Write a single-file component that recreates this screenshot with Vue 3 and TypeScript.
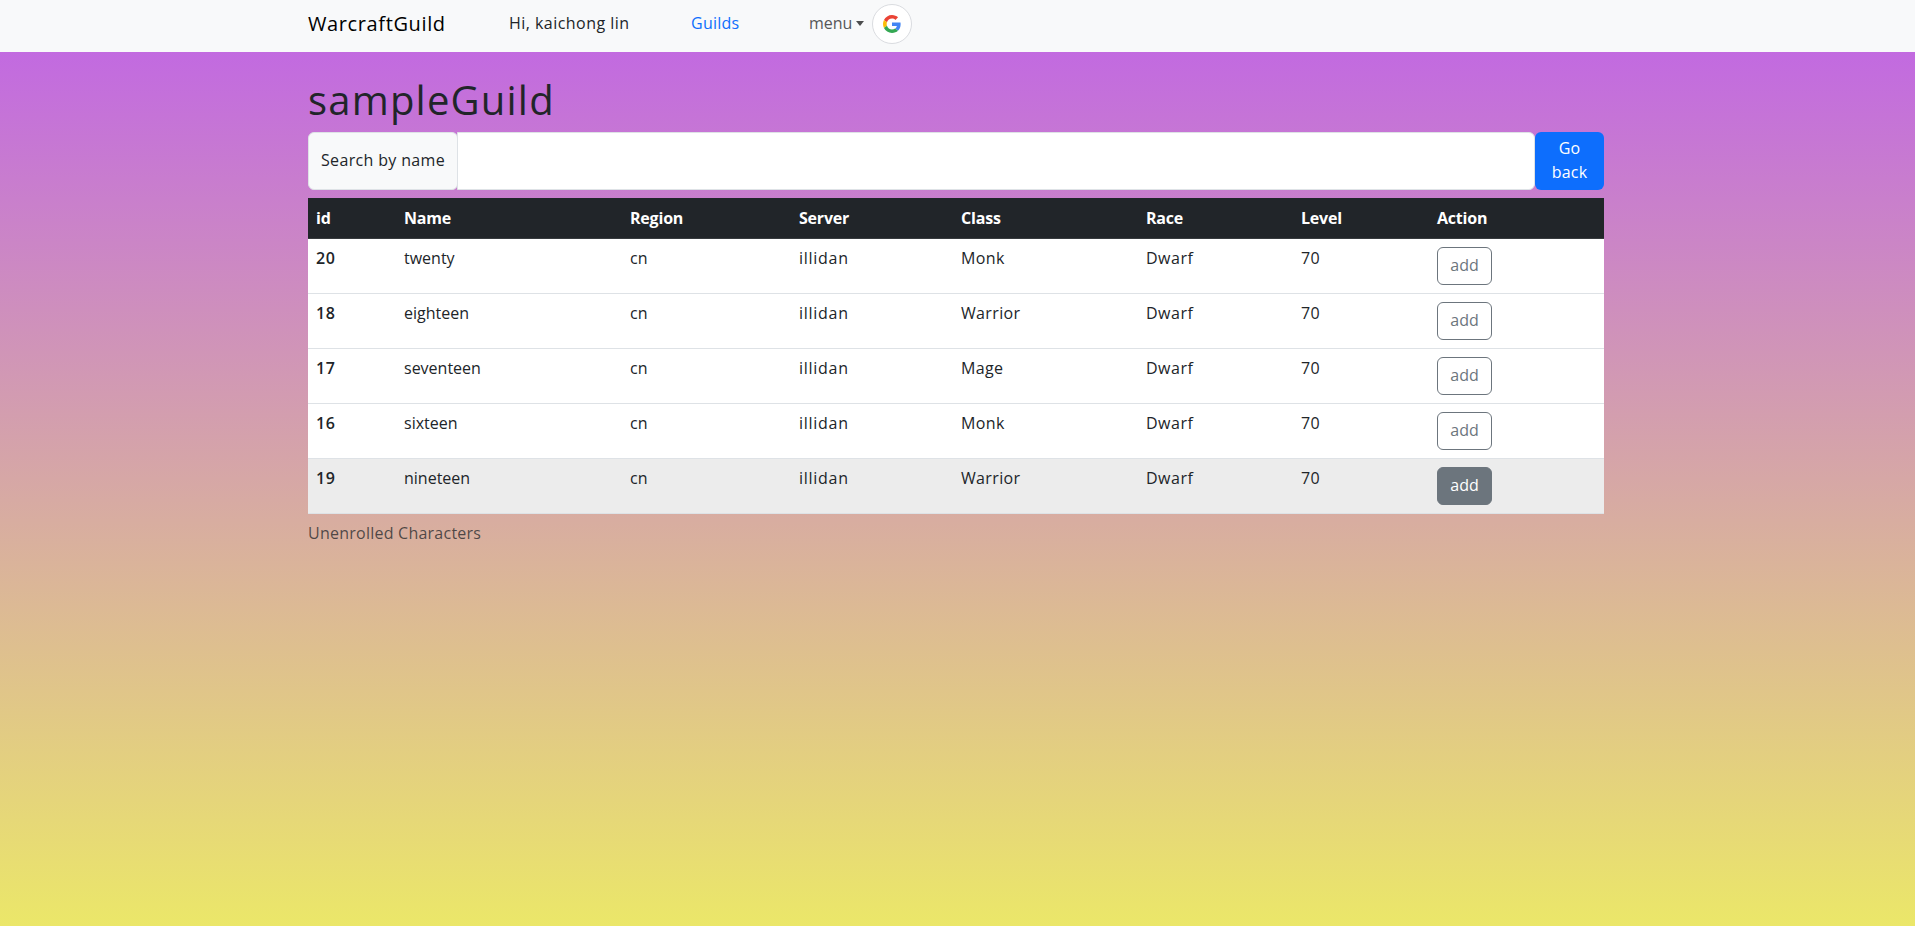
<script setup lang="ts">
interface Character {
  id: number
  name: string
  region: string
  server: string
  className: string
  race: string
  level: number
  active?: boolean
}

const columns: string[] = ['id', 'Name', 'Region', 'Server', 'Class', 'Race', 'Level', 'Action']

const characters: Character[] = [
  { id: 20, name: 'twenty', region: 'cn', server: 'illidan', className: 'Monk', race: 'Dwarf', level: 70 },
  { id: 18, name: 'eighteen', region: 'cn', server: 'illidan', className: 'Warrior', race: 'Dwarf', level: 70 },
  { id: 17, name: 'seventeen', region: 'cn', server: 'illidan', className: 'Mage', race: 'Dwarf', level: 70 },
  { id: 16, name: 'sixteen', region: 'cn', server: 'illidan', className: 'Monk', race: 'Dwarf', level: 70 },
  { id: 19, name: 'nineteen', region: 'cn', server: 'illidan', className: 'Warrior', race: 'Dwarf', level: 70, active: true },
]
</script>

<template>
  <div class="page">
    <nav class="navbar">
      <a class="brand">WarcraftGuild</a>
      <span class="greeting">Hi, kaichong lin</span>
      <a class="guilds">Guilds</a>
      <a class="menu">menu<span class="caret"></span></a>
      <button class="google" aria-label="Google">
        <svg width="18" height="18" viewBox="0 0 48 48">
          <path fill="#EA4335" d="M24 9.5c3.54 0 6.71 1.22 9.21 3.6l6.85-6.85C35.9 2.38 30.47 0 24 0 14.62 0 6.51 5.38 2.56 13.22l7.98 6.19C12.43 13.72 17.74 9.5 24 9.5z" />
          <path fill="#4285F4" d="M46.98 24.55c0-1.57-.15-3.09-.38-4.55H24v9.02h12.94c-.58 2.96-2.26 5.48-4.78 7.18l7.73 6c4.51-4.18 7.09-10.36 7.09-17.65z" />
          <path fill="#FBBC05" d="M10.53 28.59c-.48-1.45-.76-2.99-.76-4.59s.27-3.14.76-4.59l-7.98-6.19C.92 16.46 0 20.12 0 24c0 3.88.92 7.54 2.56 10.78l7.97-6.19z" />
          <path fill="#34A853" d="M24 48c6.48 0 11.93-2.13 15.89-5.81l-7.73-6c-2.15 1.45-4.92 2.3-8.16 2.3-6.26 0-11.57-4.22-13.47-9.91l-7.98 6.19C6.51 42.62 14.62 48 24 48z" />
        </svg>
      </button>
    </nav>

    <main class="content">
      <h1 class="title">sampleGuild</h1>

      <div class="search">
        <label class="search-label" for="search">Search by name</label>
        <input id="search" class="search-input" type="text" />
        <button class="go-back">Go<br />back</button>
      </div>

      <div class="table">
        <div class="row head">
          <div v-for="column in columns" :key="column" class="cell">{{ column }}</div>
        </div>
        <div v-for="c in characters" :key="c.id" class="row" :class="{ active: c.active }">
          <div class="cell id">{{ c.id }}</div>
          <div class="cell">{{ c.name }}</div>
          <div class="cell">{{ c.region }}</div>
          <div class="cell server">{{ c.server }}</div>
          <div class="cell class-name">{{ c.className }}</div>
          <div class="cell race">{{ c.race }}</div>
          <div class="cell level">{{ c.level }}</div>
          <div class="cell action"><button class="add">add</button></div>
        </div>
      </div>
      <p class="caption">Unenrolled Characters</p>
    </main>
  </div>
</template>

<style>
body {
  margin: 0;
}
</style>

<style scoped>
.page {
  box-sizing: border-box;
  height: 100vh;
  overflow: hidden;
  display: flex;
  flex-direction: column;
  font-family: 'Open Sans', 'Noto Sans', sans-serif;
  font-size: 16px;
  line-height: 24px;
  color: #212529;
}
.page * {
  box-sizing: border-box;
}
button,
input {
  font: inherit;
  margin: 0;
}
.navbar {
  flex: none;
  display: flex;
  align-items: flex-start;
  height: 52px;
  padding: 4px 0 0 308px;
  background: #f8f9fa;
}
.brand {
  width: 201px;
  padding-top: 6px;
  font-size: 20px;
  line-height: 28px;
  letter-spacing: 0.62px;
  color: #000;
}
.greeting {
  width: 182px;
  padding-top: 7px;
  letter-spacing: 0.46px;
}
.guilds {
  width: 118px;
  padding-top: 7px;
  letter-spacing: 0.25px;
  color: #0d6efd;
}
.menu {
  display: flex;
  width: 63px;
  padding-top: 7px;
  color: #565758;
}
.caret {
  width: 8px;
  height: 5px;
  margin: 10px 0 0 4px;
  border-top: 5px solid #4c4d4e;
  border-left: 4px solid transparent;
  border-right: 4px solid transparent;
}
.google {
  display: flex;
  align-items: center;
  justify-content: center;
  width: 40px;
  height: 40px;
  padding: 0;
  border: 1px solid #dadce0;
  border-radius: 50%;
  background: #fff;
}
.content {
  flex: 1;
  padding: 24px 311px 0 308px;
  background: linear-gradient(#c26ae0, #ebe769);
}
.title {
  height: 56px;
  margin: 0;
  font-size: 40px;
  font-weight: 400;
  line-height: 48px;
  letter-spacing: 1.2px;
}
.search {
  display: flex;
  height: 58px;
  margin-bottom: 8px;
}
.search-label {
  width: 150px;
  padding: 15px 0 0 12px;
  border: 1px solid #dee2e6;
  border-radius: 6px;
  background: #f8f9fa;
  letter-spacing: 0.34px;
}
.search-input {
  flex: 1;
  min-width: 0;
  margin-left: -1px;
  border: 1px solid #dee2e6;
  border-radius: 0 6px 6px 0;
  background: #fff;
}
.go-back {
  width: 69px;
  padding: 3px 0 5px;
  border: 0;
  border-radius: 6px;
  background: #0d6efd;
  color: #fff;
  letter-spacing: 0.2px;
}
.row {
  display: grid;
  grid-template-columns: 88px 226px 169px 162px 185px 155px 136px 1fr;
  height: 55px;
  border-bottom: 1px solid #dee2e6;
  background: #fff;
}
.cell {
  padding: 7px 8px 9px;
}
.head {
  height: 41px;
  border-bottom-color: #373b3e;
  background: #212529;
  color: #fff;
  font-weight: 700;
  letter-spacing: -0.2px;
}
.id {
  font-weight: 600;
  letter-spacing: 0.6px;
}
.server {
  letter-spacing: 0.72px;
}
.class-name {
  letter-spacing: 0.35px;
}
.race {
  letter-spacing: 0.5px;
}
.level {
  letter-spacing: 0.4px;
}
.action {
  padding-top: 8px;
}
.head .cell {
  padding-top: 8px;
}
.add {
  display: block;
  width: 55px;
  height: 38px;
  padding: 4px 0 6px;
  border: 1px solid #6c757d;
  border-radius: 6px;
  background: transparent;
  color: #6c757d;
}
.active {
  background: #ececec;
}
.active .add {
  background: #6c757d;
  color: #fff;
}
.caption {
  margin: 0;
  padding-top: 7px;
  letter-spacing: 0.24px;
  color: rgba(33, 37, 41, 0.75);
}
</style>
